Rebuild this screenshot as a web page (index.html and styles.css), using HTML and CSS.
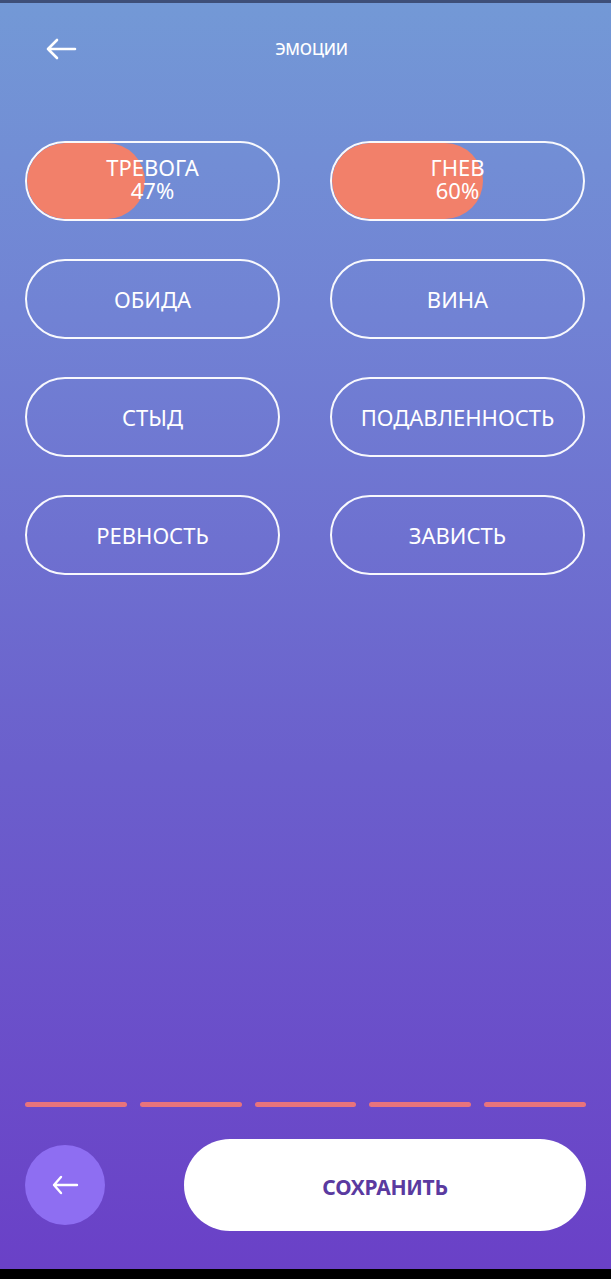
FILE: index.html
```html
<!DOCTYPE html>
<html lang="ru">
<head>
<meta charset="utf-8">
<title>Эмоции</title>
<link rel="stylesheet" href="styles.css">
</head>
<body>
<div class="screen">
  <div class="status-line"></div>
  <header class="top-bar">
    <button class="icon-btn back" aria-label="Назад">
      <svg width="32" height="22" viewBox="0 0 32 22"><path d="M30 11H3M12 2L3 11l9 9" fill="none" stroke="#fff" stroke-width="2.6" stroke-linecap="round" stroke-linejoin="round"/></svg>
    </button>
    <h1 class="title">ЭМОЦИИ</h1>
  </header>

  <main class="emotions">
    <button class="chip chip--active">
      <span class="chip-fill" style="width:47%"></span>
      <span class="chip-label">ТРЕВОГА<br>47%</span>
    </button>
    <button class="chip chip--active">
      <span class="chip-fill" style="width:60%"></span>
      <span class="chip-label">ГНЕВ<br>60%</span>
    </button>
    <button class="chip"><span class="chip-label">ОБИДА</span></button>
    <button class="chip"><span class="chip-label">ВИНА</span></button>
    <button class="chip"><span class="chip-label">СТЫД</span></button>
    <button class="chip"><span class="chip-label">ПОДАВЛЕННОСТЬ</span></button>
    <button class="chip"><span class="chip-label">РЕВНОСТЬ</span></button>
    <button class="chip"><span class="chip-label">ЗАВИСТЬ</span></button>
  </main>

  <div class="steps">
    <span class="step"></span>
    <span class="step"></span>
    <span class="step"></span>
    <span class="step"></span>
    <span class="step"></span>
  </div>

  <footer class="actions">
    <button class="round-btn" aria-label="Назад">
      <svg width="28" height="22" viewBox="0 0 28 22"><path d="M26 11H3M10 3L3 11l7 8" fill="none" stroke="#fff" stroke-width="2.4" stroke-linecap="round" stroke-linejoin="round"/></svg>
    </button>
    <button class="save-btn">СОХРАНИТЬ</button>
  </footer>
  <div class="nav-strip"></div>
</div>
</body>
</html>
```

FILE: styles.css
```css
* { box-sizing: border-box; }

html, body {
  margin: 0;
  padding: 0;
  background: #000;
}

.screen {
  width: 611px;
  height: 1279px;
  display: flex;
  flex-direction: column;
  background: linear-gradient(180deg, #7399d6 0%, #7182d4 25%, #6b5fcc 60%, #6a40c7 100%);
  font-family: "Noto Sans", "DejaVu Sans", sans-serif;
  color: #fff;
}

.status-line {
  height: 3px;
  background: #3e4f78;
  flex: none;
}

button {
  font-family: inherit;
  border: none;
  background: none;
  padding: 0;
  cursor: pointer;
}

.top-bar {
  height: 92px;
  position: relative;
  display: flex;
  align-items: center;
  justify-content: center;
  padding-left: 12px;
  flex: none;
}

.icon-btn.back {
  position: absolute;
  left: 45px;
  top: 35px;
  display: flex;
}

.title {
  margin: 0;
  font-size: 16px;
  font-weight: 500;
  letter-spacing: -0.2px;
}

.emotions {
  display: grid;
  grid-template-columns: 255px 255px;
  column-gap: 50px;
  row-gap: 38px;
  padding: 46px 25px 0;
  flex: none;
}

.chip {
  position: relative;
  height: 80px;
  border: 2px solid rgba(255, 255, 255, 0.95);
  border-radius: 40px;
  overflow: hidden;
  display: flex;
  align-items: center;
  justify-content: center;
  color: #fff;
}

.chip-fill {
  position: absolute;
  left: 0;
  top: 0;
  bottom: 0;
  background: #f2806a;
  border-radius: 40px;
}

.chip-label {
  position: relative;
  font-size: 22px;
  font-weight: 400;
  line-height: 23px;
  text-align: center;
  letter-spacing: 0;
  margin-top: -4px;
}

.chip:not(.chip--active) .chip-label {
  margin-top: 0;
}

.steps {
  margin-top: auto;
  display: flex;
  gap: 13px;
  padding: 0 25px;
  flex: none;
}

.step {
  flex: 1;
  height: 5px;
  border-radius: 3px;
  background: #e9737c;
}

.actions {
  display: flex;
  justify-content: space-between;
  align-items: flex-start;
  padding: 32px 25px 0;
  height: 162px;
  flex: none;
}

.round-btn {
  width: 80px;
  height: 80px;
  margin-top: 6px;
  border-radius: 50%;
  background: #8e6ef2;
  display: flex;
  align-items: center;
  justify-content: center;
}

.save-btn {
  width: 402px;
  height: 92px;
  border-radius: 46px;
  background: #fff;
  color: #5a3aa0;
  font-size: 21px;
  font-weight: 700;
  letter-spacing: -0.3px;
  padding-top: 4px;
}

.nav-strip {
  height: 10px;
  background: #000;
  flex: none;
}
```
